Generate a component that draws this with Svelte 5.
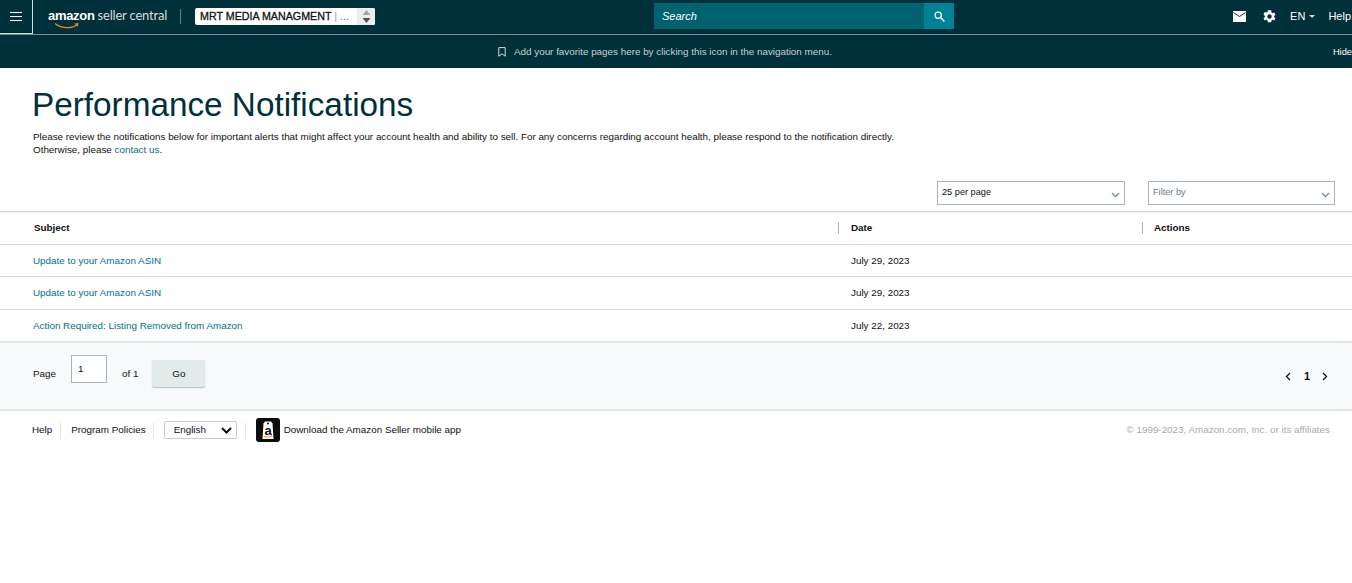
<script>
  const rows = [
    { subject: 'Update to your Amazon ASIN', date: 'July 29, 2023' },
    { subject: 'Update to your Amazon ASIN', date: 'July 29, 2023' },
    { subject: 'Action Required: Listing Removed from Amazon', date: 'July 22, 2023' }
  ];
</script>

<div class="page">
  <header class="topbar">
    <button class="menu" aria-label="Menu">
      <svg width="12" height="9" viewBox="0 0 12 9"><path d="M0 .5h12M0 4.5h12M0 8.5h12" stroke="#fff" fill="none"/></svg>
    </button>
    <div class="logo">
      <span class="logo-amazon">amazon</span><span class="logo-seller">seller central</span>
      <svg class="smile" width="26" height="8" viewBox="0 0 26 8"><path d="M1 1.500C7 6.500 17 7 23 3" stroke="#f08a1d" stroke-width="1.300" fill="none"/><path d="M20.500 1.500l4-.5-1 3.800z" fill="#f08a1d"/></svg>
    </div>
    <span class="logo-sep"></span>
    <div class="account">
      <span class="account-name">MRT MEDIA MANAGMENT <span class="pipe">|</span> <span class="dots">...</span></span>
      <span class="account-spin">
        <svg width="9" height="13" viewBox="0 0 9 13"><path d="M4.500 0l4 5H.5z" fill="#a5a5a5"/><path d="M4.500 13l4-5H.5z" fill="#555"/></svg>
      </span>
    </div>
    <div class="search">
      <span class="search-text">Search</span>
      <span class="search-btn">
        <svg width="11" height="11" viewBox="0 0 13 13"><circle cx="5" cy="5" r="3.700" stroke="#fff" stroke-width="1.500" fill="none"/><path d="M8 8l4.300 4.300" stroke="#fff" stroke-width="1.700"/></svg>
      </span>
    </div>
    <div class="top-right">
      <svg width="13" height="11" viewBox="0 0 13 11"><path d="M0 0h13v11H0z" fill="#fff"/><path d="M.5 1.500l6 4 6-4" stroke="#00303a" fill="none"/></svg>
      <svg class="gear" width="15" height="15" viewBox="0 0 24 24"><path fill="#fff" fill-rule="evenodd" d="M19.400 13a7.500 7.500 0 0 0 0-2l2.200-1.700-2.100-3.600-2.600 1a7.600 7.600 0 0 0-1.800-1L14.700 2H9.300l-.4 2.700a7.600 7.600 0 0 0-1.800 1l-2.600-1-2.100 3.600L4.600 11a7.500 7.500 0 0 0 0 2l-2.200 1.700 2.100 3.600 2.600-1c.6.400 1.100.8 1.800 1l.4 2.700h5.400l.4-2.700c.7-.3 1.200-.6 1.800-1l2.600 1 2.100-3.600zM12 15.500a3.500 3.500 0 1 1 0-7 3.500 3.500 0 0 1 0 7z"/></svg>
      <span class="lang">EN<i class="caret"></i></span>
      <span class="help">Help</span>
    </div>
  </header>

  <div class="favbar">
    <svg width="8" height="10" viewBox="0 0 8 10"><path d="M.8.600h6.400v8.600L4 6.900.8 9.200z" stroke="#d5dbdb" fill="none"/></svg>
    <span class="fav-text">Add your favorite pages here by clicking this icon in the navigation menu.</span>
    <span class="hide">Hide</span>
  </div>

  <main>
    <section class="intro">
      <h1>Performance Notifications</h1>
      <p>Please review the notifications below for important alerts that might affect your account health and ability to sell. For any concerns regarding account health, please respond to the notification directly.<br>Otherwise, please <a href="#contact">contact us</a>.</p>
    </section>

    <div class="filters">
      <div class="dropdown per-page">
        <span>25 per page</span>
        <svg width="9" height="6" viewBox="0 0 9 6"><path d="M1 1l3.500 3.500L8 1" stroke="#7f8c8d" stroke-width="1.300" fill="none"/></svg>
      </div>
      <div class="dropdown filter-by">
        <span>Filter by</span>
        <svg width="9" height="6" viewBox="0 0 9 6"><path d="M1 1l3.500 3.500L8 1" stroke="#7f8c8d" stroke-width="1.300" fill="none"/></svg>
      </div>
    </div>

    <div class="table">
      <div class="row head">
        <div class="cell subject">Subject</div>
        <div class="cell date"><span>Date</span></div>
        <div class="cell actions"><span>Actions</span></div>
      </div>
      {#each rows as row}
        <div class="row">
          <div class="cell subject"><a href="#row">{row.subject}</a></div>
          <div class="cell date">{row.date}</div>
          <div class="cell actions"></div>
        </div>
      {/each}
    </div>

    <div class="pager">
      <span>Page</span>
      <div class="page-input">1</div>
      <span class="of">of 1</span>
      <button class="go">Go</button>
      <div class="pager-nums">
        <svg width="6" height="9" viewBox="0 0 6 9"><path d="M5 1L1.500 4.500 5 8" stroke="#0f1111" stroke-width="1.300" fill="none"/></svg>
        <b>1</b>
        <svg width="6" height="9" viewBox="0 0 6 9"><path d="M1 1l3.500 3.500L1 8" stroke="#0f1111" stroke-width="1.300" fill="none"/></svg>
      </div>
    </div>
  </main>

  <footer>
    <span class="foot-link">Help</span>
    <span class="foot-sep"></span>
    <span class="foot-link policies">Program Policies</span>
    <span class="foot-sep"></span>
    <div class="foot-lang">
      <span>English</span>
      <svg width="11" height="7" viewBox="0 0 11 7"><path d="M1 1l4.500 4.500L10 1" stroke="#111" stroke-width="2" fill="none"/></svg>
    </div>
    <span class="foot-sep"></span>
    <div class="app-badge">
      <svg width="24" height="24" viewBox="0 0 24 24">
        <rect width="24" height="24" rx="3" fill="#0c0c0c"/>
        <path d="M9 3.500h6l1.500 2 1 15.500h-11l1-15.500z" fill="#fff"/>
        <circle cx="12" cy="5.500" r="1" fill="#0c0c0c"/>
        <text x="12" y="16.500" text-anchor="middle" class="badge-a">a</text>
        <path d="M8 18.500q4 1.500 8-.5" stroke="#f08a1d" fill="none"/>
      </svg>
    </div>
    <span class="foot-link app-text">Download the Amazon Seller mobile app</span>
    <span class="copyright">© 1999-2023, Amazon.com, Inc. or its affiliates</span>
  </footer>
</div>

<style>
  :global(body) {
    margin: 0;
    background: #fff;
  }
  .page {
    font-family: "Liberation Sans", Arial, sans-serif;
    font-size: 9.85px;
    color: #0f1111;
    overflow: hidden;
  }
  .topbar {
    height: 32px;
    padding-bottom: 2px;
    background: #00303a;
    border-bottom: 1px solid #7b8a8c;
    display: flex;
    align-items: center;
    color: #fff;
  }
  .menu {
    width: 33px;
    height: 34px;
    flex: none;
    margin-bottom: -2px;
    padding: 0;
    background: transparent;
    border: 0;
    border-right: 1px solid #d5dbdb;
    border-bottom: 1px solid #d5dbdb;
    display: flex;
    align-items: center;
    justify-content: center;
  }
  .logo {
    position: relative;
    margin-left: 15px;
    width: 119px;
    display: flex;
    align-items: baseline;
    white-space: nowrap;
    margin-top: -3px;
  }
  .logo-amazon {
    font-size: 13px;
    font-weight: 700;
    letter-spacing: -0.3px;
  }
  .logo-seller {
    font-family: Lato, "Liberation Sans", sans-serif;
    font-size: 13px;
    color: #d5dbdb;
    margin-left: 3px;
    letter-spacing: -0.2px;
  }
  .smile {
    position: absolute;
    left: 6px;
    top: 15px;
  }
  .logo-sep {
    width: 1px;
    height: 15px;
    background: #6f8084;
    margin-left: 13px;
  }
  .account {
    margin-left: 14px;
    width: 180px;
    height: 17px;
    background: #fff;
    border-radius: 2px;
    display: flex;
    align-items: center;
    justify-content: space-between;
    color: #0f1111;
    font-size: 10.7px;
  }
  .account-name {
    padding-left: 5px;
    white-space: nowrap;
    -webkit-text-stroke: 0.3px #0f1111;
  }
  .pipe {
    color: #7aa8d0;
    -webkit-text-stroke: 0;
  }
  .dots {
    color: #5b6b6e;
    -webkit-text-stroke: 0;
  }
  .account-spin {
    width: 18px;
    height: 17px;
    background: #eceeee;
    border-radius: 0 2px 2px 0;
    display: flex;
    align-items: center;
    justify-content: center;
  }
  .search {
    margin-left: 279px;
    width: 300px;
    height: 26px;
    background: #00626f;
    display: flex;
    align-items: center;
    justify-content: space-between;
  }
  .search-text {
    padding-left: 8px;
    font-size: 11px;
    font-style: italic;
    color: #fff;
  }
  .search-btn {
    width: 30px;
    height: 26px;
    background: #008296;
    display: flex;
    align-items: center;
    justify-content: center;
  }
  .top-right {
    margin-left: auto;
    display: flex;
    align-items: center;
    font-size: 11px;
    white-space: nowrap;
  }
  .gear {
    margin-left: 16px;
  }
  .lang {
    margin-left: 13px;
    display: flex;
    align-items: center;
  }
  .caret {
    margin-left: 4px;
    border-left: 3px solid transparent;
    border-right: 3px solid transparent;
    border-top: 3px solid #d5dbdb;
  }
  .help {
    margin-left: 13px;
    margin-right: 1px;
  }
  .favbar {
    height: 33px;
    background: #00303a;
    display: flex;
    align-items: center;
    color: #c7cfd0;
    padding-left: 498px;
  }
  .fav-text {
    margin-left: 8px;
  }
  .hide {
    margin-left: auto;
    color: #fff;
    font-size: 9.3px;
  }
  .intro {
    padding: 19px 33px 0;
  }
  h1 {
    margin: 0 0 0 -1px;
    font-size: 33.3px;
    line-height: 36px;
    font-weight: 400;
    color: #00303a;
  }
  .intro p {
    margin: 7px 0 0;
    line-height: 13px;
    color: #0f1111;
  }
  a {
    color: #007185;
    text-decoration: none;
  }
  .filters {
    display: flex;
    justify-content: flex-end;
    gap: 23px;
    padding: 25px 17px 6px 0;
  }
  .dropdown {
    height: 22px;
    border: 1px solid #a6b5b8;
    display: flex;
    align-items: center;
    justify-content: space-between;
    padding: 0 4px;
    font-size: 9.2px;
    background: #fff;
  }
  .dropdown span {
    margin-bottom: 3px;
  }
  .dropdown svg {
    margin-top: 3px;
  }
  .per-page {
    width: 178px;
  }
  .filter-by {
    width: 177px;
    color: #6f7c7e;
  }
  .table {
    border-top: 1px solid #d5d9d9;
    box-shadow: inset 0 1px 0 #efefef;
  }
  .row {
    display: grid;
    grid-template-columns: 838px 304px 1fr;
    height: 31.5px;
    border-bottom: 1px solid #d5d9d9;
    align-items: center;
  }
  .head {
    font-weight: 700;
  }
  .cell.subject {
    padding-left: 33px;
  }
  .head .cell.subject {
    padding-left: 34px;
  }
  .cell.date {
    padding-left: 13px;
  }
  .head .cell.date,
  .head .cell.actions {
    border-left: 1px solid #aab7b8;
    line-height: 12px;
    padding-left: 12px;
  }
  .head .cell.actions {
    padding-left: 11px;
  }
  .pager {
    height: 70px;
    background: #f7f9fa;
    border-top: 2px solid #e3e6e6;
    border-bottom: 2px solid #e3e6e6;
    margin-top: -1px;
    display: flex;
    align-items: center;
    padding: 0 24px 6px 33px;
    box-sizing: border-box;
  }
  .page-input {
    width: 36px;
    height: 28px;
    margin-left: 15px;
    border: 1px solid #a6b5b8;
    background: #fff;
    padding: 7px 0 0 6px;
    box-sizing: border-box;
    margin-top: -8px;
  }
  .of {
    margin-left: 15px;
  }
  .go {
    margin-left: 14px;
    width: 53px;
    height: 27px;
    border: 0;
    border-radius: 2px;
    background: #e3eaea;
    box-shadow: 0 1px 1px #b8c0c0;
    font: inherit;
    color: #0f1111;
    padding: 0;
  }
  .pager-nums {
    margin-left: auto;
    display: flex;
    align-items: center;
    gap: 13px;
    font-size: 11px;
    margin-top: 6px;
  }
  .pager-nums b {
    margin-right: -1px;
  }
  footer {
    display: flex;
    align-items: center;
    height: 38px;
    padding: 0 22px 0 32px;
  }
  .foot-link,
  .copyright {
    white-space: nowrap;
    margin-bottom: 2px;
  }
  .policies {
    margin-right: -1px;
  }
  .foot-sep {
    width: 1px;
    height: 15px;
    background: #e3e6e6;
    margin: 0 10px 0 8px;
  }
  .foot-lang {
    width: 73px;
    height: 18px;
    border: 1px solid #c9cccc;
    border-radius: 2px;
    padding: 0 4px 0 9px;
    display: flex;
    align-items: center;
    justify-content: space-between;
    box-sizing: border-box;
  }
  .foot-lang span {
    margin-bottom: 2px;
  }
  .app-badge {
    height: 24px;
  }
  .badge-a {
    font-family: "Liberation Sans", Arial, sans-serif;
    font-size: 13px;
    font-weight: 700;
    fill: #0c0c0c;
  }
  .app-text {
    margin-left: 4px;
  }
  .copyright {
    margin-left: auto;
    color: #a7abab;
  }
</style>
